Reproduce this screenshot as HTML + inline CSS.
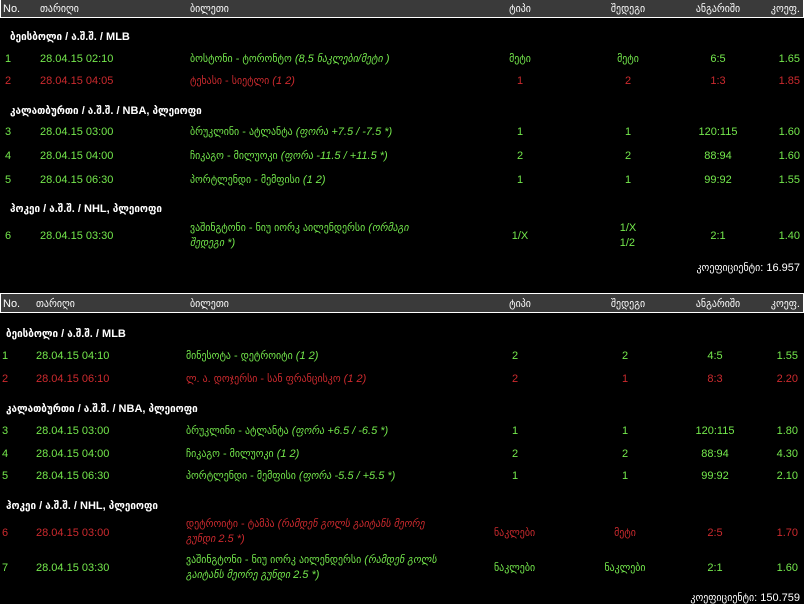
<!DOCTYPE html>
<html><head><meta charset="utf-8"><style>
html,body{margin:0;padding:0;background:#000;width:804px;height:604px;overflow:hidden}
body{position:relative;font-family:"Liberation Sans","DejaVu Sans Condensed","DejaVu Sans",sans-serif;font-size:11px;color:#fff}
.a{position:absolute;white-space:nowrap;line-height:14px;font-weight:500}
.hd{position:absolute;left:0;width:802px;height:18px;background:#3a3a3a;border:1px solid #fff}
.g{color:#74e84c}.r{color:#cc2a2e}
.w{color:#fff;font-weight:bold}
i{font-style:italic}
.c{transform:translateX(-50%)}
.rt{transform:translateX(-100%)}
.t{white-space:normal;width:265px;line-height:15px}
</style></head><body>

<div class="hd" style="top:-1px;border-top:none"></div>
<div class="a" style="top:2px;left:3px">No.</div>
<div class="a" style="top:2px;left:40px">თარიღი</div>
<div class="a" style="top:2px;left:190px">ბილეთი</div>
<div class="a c" style="top:2px;left:520px">ტიპი</div>
<div class="a c" style="top:2px;left:628px">შედეგი</div>
<div class="a c" style="top:2px;left:718px">ანგარიში</div>
<div class="a rt" style="top:2px;left:800px">კოეფ.</div>

<div class="a w" style="top:30px;left:10px">ბეისბოლი / ა.შ.შ. / MLB</div>
<div class="a g" style="top:52px;left:5px">1</div>
<div class="a g" style="top:52px;left:40px">28.04.15 02:10</div>
<div class="a g" style="top:52px;left:190px">ბოსტონი - ტორონტო <i>(8,5 ნაკლები/მეტი )</i></div>
<div class="a g c" style="top:52px;left:520px">მეტი</div>
<div class="a g c" style="top:52px;left:628px">მეტი</div>
<div class="a g c" style="top:52px;left:718px">6:5</div>
<div class="a g rt" style="top:52px;left:800px">1.65</div>
<div class="a r" style="top:74px;left:5px">2</div>
<div class="a r" style="top:74px;left:40px">28.04.15 04:05</div>
<div class="a r" style="top:74px;left:190px">ტეხასი - სიეტლი <i>(1 2)</i></div>
<div class="a r c" style="top:74px;left:520px">1</div>
<div class="a r c" style="top:74px;left:628px">2</div>
<div class="a r c" style="top:74px;left:718px">1:3</div>
<div class="a r rt" style="top:74px;left:800px">1.85</div>

<div class="a w" style="top:104px;left:10px">კალათბურთი / ა.შ.შ. / NBA, პლეიოფი</div>
<div class="a g" style="top:125px;left:5px">3</div>
<div class="a g" style="top:125px;left:40px">28.04.15 03:00</div>
<div class="a g" style="top:125px;left:190px">ბრუკლინი - ატლანტა <i>(ფორა +7.5 / -7.5 *)</i></div>
<div class="a g c" style="top:125px;left:520px">1</div>
<div class="a g c" style="top:125px;left:628px">1</div>
<div class="a g c" style="top:125px;left:718px">120:115</div>
<div class="a g rt" style="top:125px;left:800px">1.60</div>
<div class="a g" style="top:149px;left:5px">4</div>
<div class="a g" style="top:149px;left:40px">28.04.15 04:00</div>
<div class="a g" style="top:149px;left:190px">ჩიკაგო - მილუოკი <i>(ფორა -11.5 / +11.5 *)</i></div>
<div class="a g c" style="top:149px;left:520px">2</div>
<div class="a g c" style="top:149px;left:628px">2</div>
<div class="a g c" style="top:149px;left:718px">88:94</div>
<div class="a g rt" style="top:149px;left:800px">1.60</div>
<div class="a g" style="top:173px;left:5px">5</div>
<div class="a g" style="top:173px;left:40px">28.04.15 06:30</div>
<div class="a g" style="top:173px;left:190px">პორტლენდი - მემფისი <i>(1 2)</i></div>
<div class="a g c" style="top:173px;left:520px">1</div>
<div class="a g c" style="top:173px;left:628px">1</div>
<div class="a g c" style="top:173px;left:718px">99:92</div>
<div class="a g rt" style="top:173px;left:800px">1.55</div>

<div class="a w" style="top:202px;left:10px">ჰოკეი / ა.შ.შ. / NHL, პლეიოფი</div>
<div class="a g" style="top:229px;left:5px">6</div>
<div class="a g" style="top:229px;left:40px">28.04.15 03:30</div>
<div class="a g t" style="top:221px;left:190px;width:250px">ვაშინგტონი - ნიუ იორკ აილენდერსი <i>(ორმაგი შედეგი *)</i></div>
<div class="a g c" style="top:229px;left:520px">1/X</div>
<div class="a g c" style="top:221px;left:628px;line-height:15px">1/X<br>1/2</div>
<div class="a g c" style="top:229px;left:718px">2:1</div>
<div class="a g rt" style="top:229px;left:800px">1.40</div>
<div class="a rt" style="top:261px;left:800px">კოეფიციენტი: 16.957</div>

<div class="hd" style="top:293px"></div>
<div class="a" style="top:297px;left:3px">No.</div>
<div class="a" style="top:297px;left:36px">თარიღი</div>
<div class="a" style="top:297px;left:190px">ბილეთი</div>
<div class="a c" style="top:297px;left:520px">ტიპი</div>
<div class="a c" style="top:297px;left:628px">შედეგი</div>
<div class="a c" style="top:297px;left:718px">ანგარიში</div>
<div class="a rt" style="top:297px;left:800px">კოეფ.</div>

<div class="a w" style="top:327px;left:6px">ბეისბოლი / ა.შ.შ. / MLB</div>
<div class="a g" style="top:349px;left:2px">1</div>
<div class="a g" style="top:349px;left:36px">28.04.15 04:10</div>
<div class="a g" style="top:349px;left:186px">მინესოტა - დეტროიტი <i>(1 2)</i></div>
<div class="a g c" style="top:349px;left:515px">2</div>
<div class="a g c" style="top:349px;left:625px">2</div>
<div class="a g c" style="top:349px;left:715px">4:5</div>
<div class="a g rt" style="top:349px;left:798px">1.55</div>
<div class="a r" style="top:372px;left:2px">2</div>
<div class="a r" style="top:372px;left:36px">28.04.15 06:10</div>
<div class="a r" style="top:372px;left:186px">ლ. ა. დოჯერსი - სან ფრანცისკო <i>(1 2)</i></div>
<div class="a r c" style="top:372px;left:515px">2</div>
<div class="a r c" style="top:372px;left:625px">1</div>
<div class="a r c" style="top:372px;left:715px">8:3</div>
<div class="a r rt" style="top:372px;left:798px">2.20</div>

<div class="a w" style="top:402px;left:6px">კალათბურთი / ა.შ.შ. / NBA, პლეიოფი</div>
<div class="a g" style="top:424px;left:2px">3</div>
<div class="a g" style="top:424px;left:36px">28.04.15 03:00</div>
<div class="a g" style="top:424px;left:186px">ბრუკლინი - ატლანტა <i>(ფორა +6.5 / -6.5 *)</i></div>
<div class="a g c" style="top:424px;left:515px">1</div>
<div class="a g c" style="top:424px;left:625px">1</div>
<div class="a g c" style="top:424px;left:715px">120:115</div>
<div class="a g rt" style="top:424px;left:798px">1.80</div>
<div class="a g" style="top:447px;left:2px">4</div>
<div class="a g" style="top:447px;left:36px">28.04.15 04:00</div>
<div class="a g" style="top:447px;left:186px">ჩიკაგო - მილუოკი <i>(1 2)</i></div>
<div class="a g c" style="top:447px;left:515px">2</div>
<div class="a g c" style="top:447px;left:625px">2</div>
<div class="a g c" style="top:447px;left:715px">88:94</div>
<div class="a g rt" style="top:447px;left:798px">4.30</div>
<div class="a g" style="top:469px;left:2px">5</div>
<div class="a g" style="top:469px;left:36px">28.04.15 06:30</div>
<div class="a g" style="top:469px;left:186px">პორტლენდი - მემფისი <i>(ფორა -5.5 / +5.5 *)</i></div>
<div class="a g c" style="top:469px;left:515px">1</div>
<div class="a g c" style="top:469px;left:625px">1</div>
<div class="a g c" style="top:469px;left:715px">99:92</div>
<div class="a g rt" style="top:469px;left:798px">2.10</div>

<div class="a w" style="top:499px;left:6px">ჰოკეი / ა.შ.შ. / NHL, პლეიოფი</div>
<div class="a r" style="top:526px;left:2px">6</div>
<div class="a r" style="top:526px;left:36px">28.04.15 03:00</div>
<div class="a r t" style="top:517px;left:186px">დეტროიტი - ტამპა <i>(რამდენ გოლს გაიტანს მეორე გუნდი 2.5 *)</i></div>
<div class="a r" style="top:526px;left:494px">ნაკლები</div>
<div class="a r c" style="top:526px;left:625px">მეტი</div>
<div class="a r c" style="top:526px;left:715px">2:5</div>
<div class="a r rt" style="top:526px;left:798px">1.70</div>
<div class="a g" style="top:561px;left:2px">7</div>
<div class="a g" style="top:561px;left:36px">28.04.15 03:30</div>
<div class="a g t" style="top:553px;left:186px">ვაშინგტონი - ნიუ იორკ აილენდერსი <i>(რამდენ გოლს გაიტანს მეორე გუნდი 2.5 *)</i></div>
<div class="a g" style="top:561px;left:494px">ნაკლები</div>
<div class="a g c" style="top:561px;left:625px">ნაკლები</div>
<div class="a g c" style="top:561px;left:715px">2:1</div>
<div class="a g rt" style="top:561px;left:798px">1.60</div>
<div class="a rt" style="top:591px;left:800px">კოეფიციენტი: 150.759</div>
</body></html>
